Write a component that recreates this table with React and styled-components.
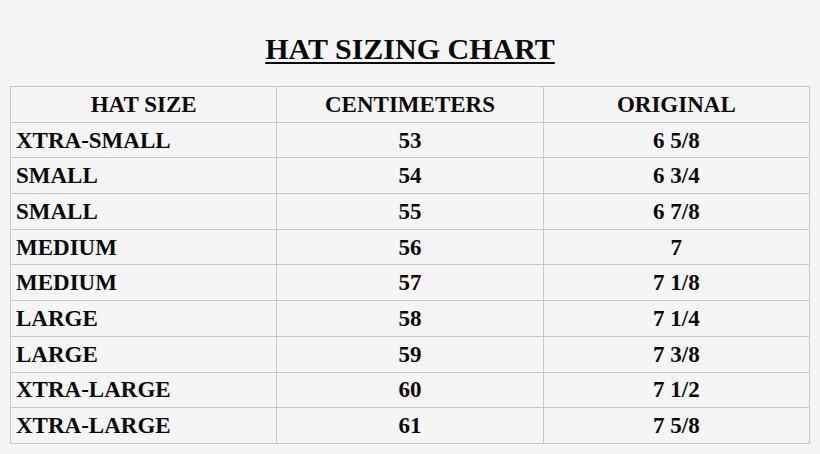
import React from 'react';
import styled, { createGlobalStyle } from 'styled-components';

const GlobalStyle = createGlobalStyle`
    html, body {
        margin: 0;
        padding: 0;
        background: #f5f5f5;
    }
`;

const Page = styled.div`
    width: 820px;
    height: 454px;
    background: #f5f5f5;
    font-family: "Liberation Serif", "Times New Roman", serif;
    color: #0a0a0a;
    display: flex;
    flex-direction: column;
    align-items: center;
    padding-top: 32px;
    box-sizing: border-box;
`;

const Title = styled.h1`
    margin: 0 0 20px 0;
    font-size: 30px;
    font-weight: bold;
    text-decoration: underline;
    text-decoration-thickness: 2px;
    text-underline-offset: 3px;
    line-height: 34px;
`;

const Table = styled.table`
    width: 800px;
    border-collapse: collapse;
    table-layout: fixed;
`;

const Cell = styled.td`
    border: 1px solid #c8c8c8;
    height: 34.7px;
    padding: 0 5px;
    font-size: 23px;
    font-weight: bold;
    text-align: ${(p) => (p.$left ? 'left' : 'center')};
    vertical-align: middle;
    line-height: 1;
`;

const rows = [
    ['XTRA-SMALL', '53', '6 5/8'],
    ['SMALL', '54', '6 3/4'],
    ['SMALL', '55', '6 7/8'],
    ['MEDIUM', '56', '7'],
    ['MEDIUM', '57', '7 1/8'],
    ['LARGE', '58', '7 1/4'],
    ['LARGE', '59', '7 3/8'],
    ['XTRA-LARGE', '60', '7 1/2'],
    ['XTRA-LARGE', '61', '7 5/8'],
];

const App = () => {
    return (
        <Page>
            <GlobalStyle />
            <Title>HAT SIZING CHART</Title>
            <Table>
                <tbody>
                    <tr>
                        <Cell>HAT SIZE</Cell>
                        <Cell>CENTIMETERS</Cell>
                        <Cell>ORIGINAL</Cell>
                    </tr>
                    {rows.map((r, i) => (
                        <tr key={i}>
                            <Cell $left>{r[0]}</Cell>
                            <Cell>{r[1]}</Cell>
                            <Cell>{r[2]}</Cell>
                        </tr>
                    ))}
                </tbody>
            </Table>
        </Page>
    );
};

export default App;
